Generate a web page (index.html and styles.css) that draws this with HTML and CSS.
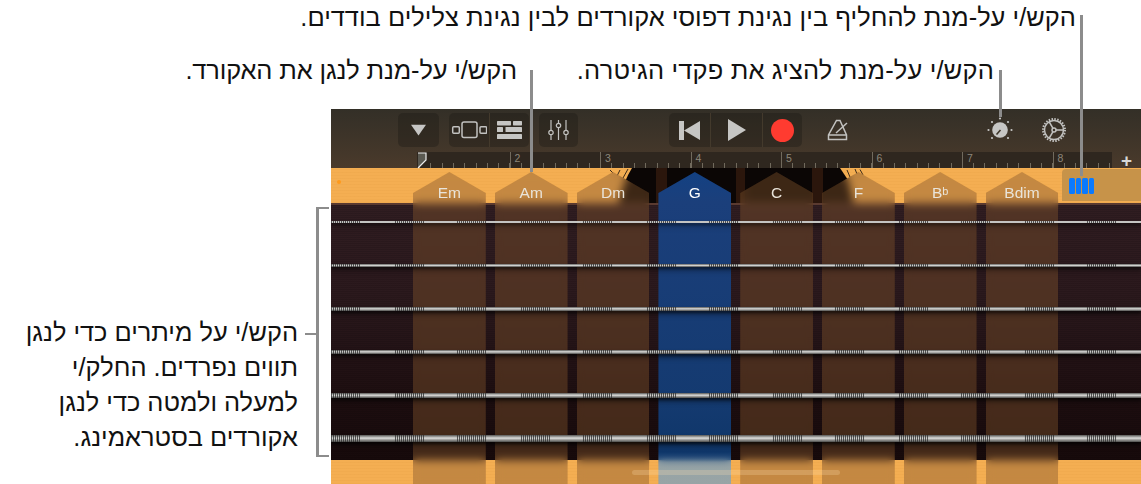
FILE: index.html
```html
<!DOCTYPE html>
<html lang="he">
<head>
<meta charset="utf-8">
<title>Guitar</title>
<link rel="stylesheet" href="styles.css">
</head>
<body>
<div class="figure">
  <p class="note note-modes" dir="rtl">הקש/י על-מנת להחליף בין נגינת דפוסי אקורדים לבין נגינת צלילים בודדים.</p>
  <p class="note note-controls" dir="rtl">הקש/י על-מנת להציג את פקדי הגיטרה.</p>
  <p class="note note-chord" dir="rtl">הקש/י על-מנת לנגן את האקורד.</p>
  <p class="note note-strings" dir="rtl">הקש/י על מיתרים כדי לנגן<br>תווים נפרדים. החלק/י<br>למעלה ולמטה כדי לנגן<br>אקורדים בסטראמינג.</p>

  <main class="app">
    <header class="chrome">
      <div class="toolbar">
        <div class="btn btn-menu">
          <svg width="17" height="12" viewBox="0 0 17 12"><path class="fill" d="M1 0.8h15L8.5 11.6z" stroke-linejoin="round"/></svg>
        </div>
        <div class="group group-view">
          <div class="cell cell-40">
            <svg width="36" height="18" viewBox="0 0 36 18"><g class="line"><rect x="1.7" y="5.7" width="6.6" height="6.6" rx="1"/><rect x="11" y="1" width="15" height="15.5" rx="2"/><rect x="29" y="5.7" width="6.6" height="6.6" rx="1"/></g></svg>
          </div>
          <div class="cell cell-40">
            <svg width="25" height="18" viewBox="0 0 25 18"><g class="fill"><rect width="14" height="4.4" y="0" rx=".6"/><rect x="16" width="9" height="4.4" y="0" rx=".6"/><rect width="6" height="5" y="6" rx=".6"/><rect x="8.5" width="16.5" height="5" y="6" rx=".6"/><rect width="25" height="5" y="13" rx=".6"/></g></svg>
          </div>
        </div>
        <div class="btn btn-mixer">
          <svg width="21" height="20" viewBox="0 0 21 20"><g class="line thin"><path d="M3 0v10M3 15v5M10.500 0v3M10.500 8v12M18 0v10M18 15v5"/><circle cx="3" cy="12.500" r="2.200"/><circle cx="10.500" cy="5.500" r="2.200"/><circle cx="18" cy="12.500" r="2.200"/></g></svg>
        </div>
        <div class="group group-transport">
          <div class="cell cell-41">
            <svg width="21" height="19" viewBox="0 0 21 19"><path class="fill" d="M0 0h5v19H0zM21 0v19L5 9.500z"/></svg>
          </div>
          <div class="cell cell-52">
            <svg width="18" height="22" viewBox="0 0 18 22"><path class="fill" d="M0 0l18 11L0 22z"/></svg>
          </div>
          <div class="cell cell-40">
            <span class="rec"></span>
          </div>
        </div>
        <div class="tool tool-metro">
          <svg width="22" height="22" viewBox="0 0 22 22"><g class="line"><path d="M9.500 1.500h3.500L19.500 16v4.500H1.500V16zM1.500 16h18"/><path d="M9 14L20 4"/></g></svg>
        </div>
        <div class="tool tool-knob">
          <svg width="26" height="26" viewBox="0 0 26 26"><circle class="fill" cx="13" cy="13" r="7.800"/><path d="M13.500 13l-4 4.500" class="needle"/><g class="fill"><circle cx="1.500" cy="13" r="1.100"/><circle cx="24.500" cy="13" r="1.100"/><circle cx="13" cy="1.500" r="1.100"/><circle cx="5" cy="5" r="1.100"/><circle cx="21" cy="5" r="1.100"/><circle cx="5" cy="21" r="1.100"/><circle cx="21" cy="21" r="1.100"/></g></svg>
        </div>
        <div class="tool tool-gear">
          <svg width="24" height="24" viewBox="0 0 24 24"><g class="line"><circle cx="12" cy="12" r="9.500"/><circle cx="12" cy="12" r="11" stroke-dasharray="1.500 1.380" stroke-width="2"/><circle cx="12" cy="12" r="2"/><path d="M14 12h7.500M11 13.700L7 20.500M11 10.300L7 3.500"/></g></svg>
        </div>
      </div>
      <div class="ruler-row">
        <div class="ruler">
          <svg class="playhead" width="11" height="17" viewBox="0 0 11 17"><path d="M1 1h8v7L1 16z" fill="#5b5a52"/><path d="M1 1h8v7L1 16" fill="none" stroke="#eee" stroke-width="1.200"/></svg>
          <span class="bar"></span>
          <span class="bar">2</span>
          <span class="bar">3</span>
          <span class="bar">4</span>
          <span class="bar">5</span>
          <span class="bar">6</span>
          <span class="bar">7</span>
          <span class="bar">8</span>
        </div>
        <span class="plus">+</span>
      </div>
    </header>

    <section class="board">
      <div class="wood wood-top">
        <span class="dot"></span>
        <svg class="hole" width="270" height="35" viewBox="0 0 270 35">
          <path d="M22 0H230L238 12Q241 24 244 37H8Q13 14 22 0z" fill="#0b0605"/>
          <path d="M46 0h11v37H46zM126 0h9v37h-9zM202 0h11v37h-11z" fill="#2b160c"/>
          <g class="rosette"><path d="M0 2l3 3M10 2l-3 6M18 1l-5 9M237 2l3 7M245 1l2 5M250 1.500l3 5.500"/></g>
        </svg>
      </div>
      <div class="fretboard"></div>
      <div class="wood wood-bottom"></div>

      <div class="chords">
        <div class="chord"><span>Em</span></div>
        <div class="chord"><span>Am</span></div>
        <div class="chord"><span>Dm</span></div>
        <div class="chord chord-on"><span>G</span></div>
        <div class="chord"><span>C</span></div>
        <div class="chord"><span>F</span></div>
        <div class="chord"><span>B<sup>b</sup></span></div>
        <div class="chord"><span>Bdim</span></div>
      </div>

      <div class="pattern"><i></i><i></i><i></i><i></i></div>

      <div class="strings">
        <div class="row"><div class="string s1"></div></div>
        <div class="row"><div class="string s2"></div></div>
        <div class="row"><div class="string s3"></div></div>
        <div class="row"><div class="string s4"></div></div>
        <div class="row"><div class="string s5"></div></div>
        <div class="row"><div class="string s6"></div></div>
      </div>
      <span class="home"></span>
    </section>
  </main>

  <span class="leader leader-modes"></span>
  <span class="leader leader-controls"></span>
  <span class="leader leader-chord"></span>
  <span class="bracket"></span>
  <span class="bracket-tick"></span>
</div>
</body>
</html>
```
FILE: styles.css
```css
* { box-sizing: border-box; }
html, body { margin: 0; padding: 0; background: #fff; }
body { width: 1141px; height: 484px; overflow: hidden; font-family: "Liberation Sans", Arial, sans-serif; }

.figure { position: relative; width: 1141px; height: 484px; padding: 109px 0 0 331px; }

/* callouts */
.note { position: absolute; margin: 0; font-size: 25.4px; line-height: 35px; color: #111; white-space: nowrap; }
.note-modes { top: 0; right: 65px; letter-spacing: .04px; }
.note-controls { top: 53px; right: 147px; letter-spacing: .2px; }
.note-chord { top: 53px; right: 624px; letter-spacing: -.12px; }
.note-strings { top: 315px; right: 843px; text-align: right; }

.leader { position: absolute; width: 3px; background: #8c8c8c; z-index: 5; }
.leader-modes { left: 1080px; top: 15px; height: 161px; }
.leader-controls { left: 999px; top: 70px; height: 47px; }
.leader-chord { left: 530px; top: 70px; height: 102px; }
.bracket { position: absolute; left: 316px; top: 207px; width: 13px; height: 250px; border: 3px solid #8c8c8c; border-right-width: 0; border-top-width: 2px; border-bottom-width: 2px; }
.bracket-tick { position: absolute; left: 305px; top: 333px; width: 11px; height: 2px; background: #8c8c8c; }

/* app */
.app { width: 810px; height: 375px; display: flex; flex-direction: column; overflow: hidden; }
.chrome { position: relative; z-index: 2; height: 59px; background: linear-gradient(#332f27, #4a3a2b); display: flex; flex-direction: column; }
.toolbar { height: 43px; padding: 4px 0 0 67px; display: flex; align-items: flex-start; }
.btn, .group { height: 34px; background: rgba(30, 26, 20, .38); border-radius: 5px; display: flex; align-items: center; justify-content: center; }
.btn-menu { width: 41px; }
.group-view { width: 80px; margin-left: 10px; }
.btn-mixer { width: 39px; margin-left: 10px; }
.group-transport { width: 133px; margin-left: 91px; }
.cell { height: 100%; display: flex; align-items: center; justify-content: center; border-left: 1px solid rgba(70, 60, 46, .9); }
.cell:first-child { border-left: 0; }
.cell-40 { width: 40px; }
.cell-41 { width: 41px; }
.cell-52 { width: 52px; }
.rec { width: 23px; height: 23px; border-radius: 50%; background: #ff3b30; }
.tool { height: 34px; display: flex; align-items: center; justify-content: center; }
.tool-metro { width: 22px; margin-left: 25px; }
.tool-knob { width: 26px; margin-left: 138px; }
.tool-gear { width: 24px; margin-left: 29px; }

.fill { fill: #c6c6c4; stroke: none; }
.line { fill: none; stroke: #c2c2c0; stroke-width: 1.5; }
.line.thin { stroke-width: 1.2; }
.needle { stroke: #3d3529; stroke-width: 1.6; fill: none; }

.ruler-row { height: 16px; display: flex; justify-content: flex-end; }
.ruler { position: relative; width: 695px; height: 16px; padding-left: 2px; display: flex; background-color: #2f271f; background-image: repeating-linear-gradient(90deg, #716a5d 0 1px, transparent 1px 11.31px); background-size: 100% 5px; background-repeat: no-repeat; background-position: 2px 100%; }
.playhead { position: absolute; left: 0; top: 0; }
.bar { width: 90.5px; flex: none; height: 16px; border-left: 1px solid #716a5d; padding: 1px 0 0 4px; font-size: 10.500px; line-height: 11px; color: #8c867a; }
.bar:first-of-type { border-left-color: transparent; }
.plus { width: 29px; text-align: center; color: #d8d8d6; font-size: 19px; line-height: 17px; font-weight: bold; }

/* board */
.board { position: relative; height: 316px; display: flex; flex-direction: column; }
.wood { background-color: #f4ae52; background-image: repeating-linear-gradient(0deg, rgba(190, 120, 30, .06) 0 1px, transparent 1px 3px); }
.wood-top { position: relative; height: 35px; }
.wood-bottom { height: 24px; }
.dot { position: absolute; left: 6px; top: 12px; width: 4px; height: 4px; border-radius: 50%; background: #ff9a1c; }
.hole { position: absolute; left: 279px; top: 0; }
.rosette path { fill: none; stroke: #3d2a18; stroke-width: 1; }
.home { position: absolute; left: 301px; bottom: 9px; width: 208px; height: 5px; border-radius: 3px; background: rgba(255, 225, 180, .24); }
.fretboard { height: 257px; border-top: 2px solid #5a3a30; background-image: repeating-linear-gradient(0deg, rgba(0, 0, 0, .1) 0 1px, transparent 1px 2px), linear-gradient(#301d21 0, #2b191d 35%, #1c0d0f 80%, #170a0b 100%); }

.chords { position: absolute; left: 82px; top: 4px; bottom: 0; display: flex; gap: 9px; }
.chord { width: 72.800px; height: 100%; background: rgba(130, 85, 45, .42); -webkit-backdrop-filter: blur(4px); backdrop-filter: blur(4px); clip-path: polygon(50% 0, 100% 21px, 100% 100%, 0 100%, 0 21px); text-align: center; color: #e9e4da; font-size: 15.500px; line-height: 18px; padding-top: 12px; }
.chord sup { font-size: 11px; line-height: 0; vertical-align: 3px; }
.chord-on { background: linear-gradient(#134183 0, #1b3f7b 30px, #143a70 230px, #0f3669 280px, rgba(60, 155, 250, .5) 290px); color: #fff; }

.pattern { position: absolute; left: 731px; top: 1px; width: 79px; height: 32px; border-radius: 4px 0 0 0; background: #c79349; padding: 9px 0 0 7px; display: flex; gap: 1px; align-items: flex-start; }
.pattern i { width: 5.600px; height: 16px; border-radius: 1.5px; background: #0a7aff; }

.strings { position: absolute; left: 0; right: 0; top: 32.300px; display: grid; grid-auto-rows: 43.4px; }
.row { display: flex; align-items: center; }
.string { position: relative; width: 100%; background: linear-gradient(#565654, #dededc 45%, #a4a4a2 65%, #4c4c4a); box-shadow: 0 2px 3px rgba(0, 0, 0, .6), 0 4px 5px rgba(0, 0, 0, .35); }
.string::after { content: ""; position: absolute; inset: 0; background: repeating-linear-gradient(90deg, rgba(50, 50, 50, .8) 0 1px, transparent 1px 2px); -webkit-mask-image: repeating-linear-gradient(90deg, #000 0 30px, transparent 30px 63px); mask-image: repeating-linear-gradient(90deg, #000 0 30px, transparent 30px 63px); }
.s1 { height: 2px; background: #c4c4c2; }
.s2 { height: 3px; }
.s3 { height: 3.500px; }
.s4 { height: 4.500px; }
.s5 { height: 5.500px; }
.s6 { height: 7px; }
```
